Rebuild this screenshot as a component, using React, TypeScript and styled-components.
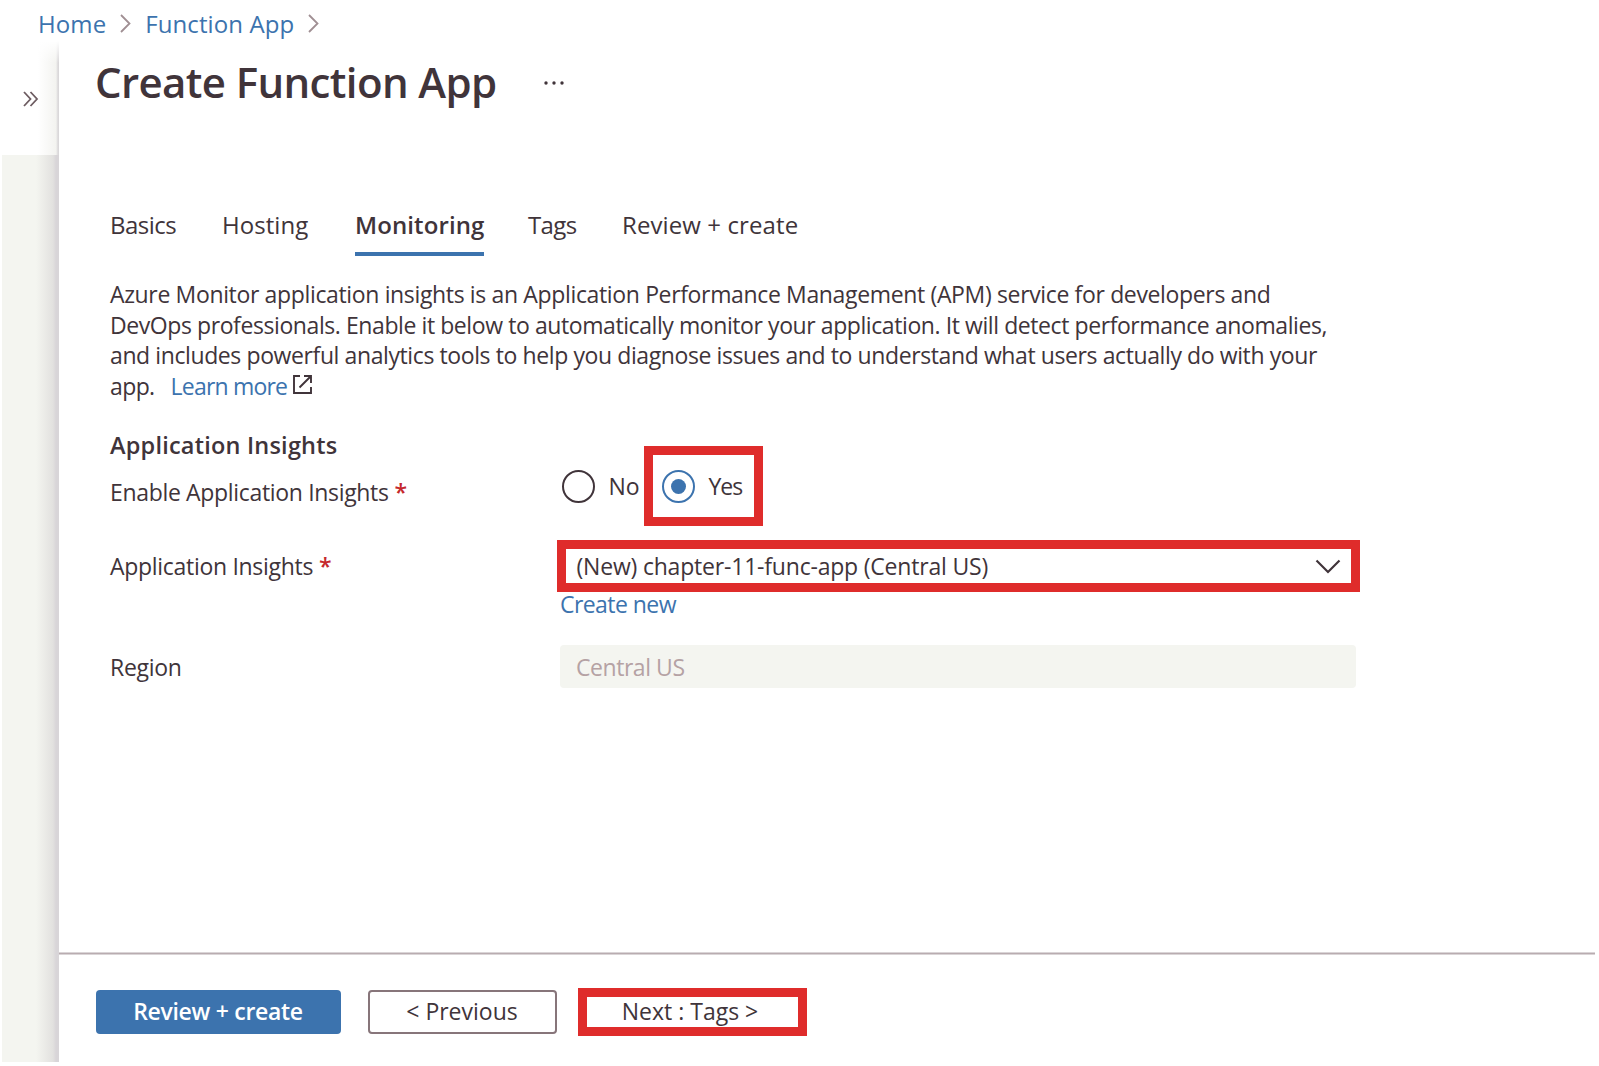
import React from "react";
import styled, { createGlobalStyle } from "styled-components";

const INK = "#40343a";
const BLUE = "#3c73ae";
const RED = "#df2c2b";

const GlobalStyle = createGlobalStyle`
  *, *::before, *::after { box-sizing: border-box; }
  body { margin: 0; background: #fff; }
`;

const Page = styled.div`
  display: flex;
  flex-direction: column;
  width: 1599px;
  height: 1066px;
  overflow: hidden;
  background: #fff;
  color: ${INK};
  font-family: "Open Sans", "Noto Sans", sans-serif;
  font-size: 23px;
`;

const Text = styled.span<{ $ls?: number }>`
  white-space: pre;
  letter-spacing: ${(p) => p.$ls ?? 0}px;
`;

const Breadcrumb = styled.nav`
  display: flex;
  align-items: center;
  flex: 0 0 41px;
  height: 41px;
  padding: 6px 0 0 38px;
  color: ${BLUE};
  font-size: 24px;
  line-height: 34px;
`;

const Separator = styled.svg<{ $left: number; $right: number }>`
  display: block;
  width: 11px;
  height: 19px;
  margin-left: ${(p) => p.$left}px;
  margin-right: ${(p) => p.$right}px;
`;

const Body = styled.div`
  display: flex;
  flex: 1;
  min-height: 0;
`;

const Rail = styled.aside`
  display: flex;
  flex-direction: column;
  width: 59px;
  padding-bottom: 4px;
`;

const RailTop = styled.div`
  height: 114px;
  padding: 50px 0 0 23px;
  background:
    linear-gradient(to bottom, #fff, rgba(255, 255, 255, 0) 22px),
    linear-gradient(to right, #fff 38px, #f3f3f0 56px, #dad8da 58px, #dad8da 59px);
`;

const Expand = styled.svg`
  display: block;
  width: 16px;
  height: 16px;
`;

const RailBody = styled.div`
  flex: 1;
  margin-left: 2px;
  background: linear-gradient(to right, #f4f5f0 34px, #e2e1df 51px, #d8d5d8 54px);
`;

const Panel = styled.main`
  display: flex;
  flex-direction: column;
  flex: 1;
`;

const TitleRow = styled.header`
  display: flex;
  align-items: center;
  height: 80px;
  padding: 2px 0 0 36px;
`;

const Title = styled.h1`
  margin: 0;
  width: 449px;
  font-size: 42px;
  font-weight: 600;
  line-height: 60px;
`;

const Dots = styled.svg`
  display: block;
  width: 20px;
  height: 4px;
  margin-top: 1px;
`;

const Tabs = styled.div`
  display: flex;
  height: 63px;
  margin: 72px 0 0 51px;
  font-size: 24px;
  line-height: 64px;
`;

const Tab = styled.div<{ $active?: boolean; $w: number }>`
  width: ${(p) => p.$w}px;
  font-weight: ${(p) => (p.$active ? 600 : 400)};
`;

const TabInner = styled.div<{ $active?: boolean }>`
  width: fit-content;
  height: 63px;
  box-shadow: ${(p) => (p.$active ? `inset 0 -4px ${BLUE}` : "none")};
`;

const Intro = styled.div`
  display: flex;
  flex-direction: column;
  margin: 23px 0 0 51px;
  line-height: 30.5px;
`;

const IntroLine = styled.div`
  display: flex;
  align-items: center;
  height: 30.5px;
`;

const Link = styled(Text)`
  color: ${BLUE};
`;

const LearnMore = styled.a`
  display: flex;
  align-items: center;
  gap: 6px;
  margin-left: 16px;
`;

const ExternalIcon = styled.svg`
  display: block;
  width: 19px;
  height: 19px;
  margin-bottom: 3px;
`;

const Heading = styled.h2`
  margin: 34px 0 0 51px;
  height: 20px;
  font-size: 23.5px;
  font-weight: 600;
  line-height: 20px;
`;

const Row = styled.div<{ $top: number }>`
  display: grid;
  grid-template-columns: 450px 800px;
  margin: ${(p) => p.$top}px 0 0 51px;
`;

const Label = styled.div<{ $h: number; $drop?: number }>`
  height: ${(p) => p.$h}px;
  padding-top: ${(p) => p.$drop ?? 0}px;
  line-height: ${(p) => p.$h - (p.$drop ?? 0)}px;
`;

const Star = styled.span`
  margin-left: 6px;
  color: #c5282c;
  font-weight: 600;
`;

const Options = styled.div`
  display: flex;
  height: 62px;
`;

const Option = styled.div<{ $marked?: boolean; $w: number }>`
  display: flex;
  align-items: center;
  gap: 14px;
  width: ${(p) => p.$w}px;
  padding-left: ${(p) => (p.$marked ? 8.5 : 1.5)}px;
  outline: ${(p) => (p.$marked ? `9px solid ${RED}` : "none")};
`;

const Radio = styled.span<{ $on?: boolean }>`
  display: flex;
  align-items: center;
  justify-content: center;
  flex: none;
  width: 33px;
  height: 33px;
  border: 2px solid ${(p) => (p.$on ? BLUE : INK)};
  border-radius: 50%;
  &::after {
    content: "";
    width: 15px;
    height: 15px;
    border-radius: 50%;
    background: ${(p) => (p.$on ? BLUE : "transparent")};
  }
`;

const Select = styled.div`
  display: flex;
  align-items: center;
  justify-content: space-between;
  width: 785px;
  height: 34px;
  margin-left: 5.5px;
  padding: 0 10px 0 11px;
  line-height: 32px;
  outline: 9px solid ${RED};
`;

const Chevron = styled.svg`
  display: block;
  width: 26px;
  height: 15px;
`;

const CreateNew = styled.div`
  height: 30px;
  margin-top: 6px;
  line-height: 30px;
`;

const Disabled = styled.div`
  width: 796px;
  height: 43px;
  padding-left: 16px;
  border-radius: 4px;
  background: #f4f5f0;
  color: #b5a2a4;
  line-height: 44px;
`;

const Footer = styled.footer`
  display: flex;
  height: 114px;
  margin: auto 4px 0 0;
  padding: 38px 0 0 36.5px;
  background: linear-gradient(#dad5d7 1px, #b9acb0 1px, #b9acb0 2px, #dad5d7 2px, #dad5d7 3px, #fff 3px);
`;

const Button = styled.button<{ $kind: "primary" | "plain" | "marked"; $w: number; $left?: number }>`
  display: flex;
  align-items: center;
  justify-content: center;
  width: ${(p) => p.$w}px;
  height: ${(p) => (p.$kind === "marked" ? 30 : 44)}px;
  margin: ${(p) => (p.$kind === "marked" ? 7 : 0)}px 0 0 ${(p) => p.$left ?? 0}px;
  padding: 0 ${(p) => (p.$kind === "marked" ? 4 : 0)}px 2px 0;
  border: ${(p) => (p.$kind === "plain" ? "2px solid #87757a" : "0")};
  outline: ${(p) => (p.$kind === "marked" ? `9px solid ${RED}` : "none")};
  border-radius: ${(p) => (p.$kind === "marked" ? 0 : 4)}px;
  background: ${(p) => (p.$kind === "primary" ? BLUE : "#fff")};
  color: ${(p) => (p.$kind === "primary" ? "#fff" : INK)};
  font: inherit;
  font-weight: ${(p) => (p.$kind === "primary" ? 600 : 400)};
`;

const Crumb = ({ left, right }: { left: number; right: number }) => (
  <Separator $left={left} $right={right} viewBox="0 0 11 19" fill="none" stroke="#a08f93" strokeWidth="1.8">
    <path d="M1 1 L9.5 9.5 L1 18" />
  </Separator>
);

export default function App() {
  return (
    <Page>
      <GlobalStyle />
      <Breadcrumb>
        <Text $ls={0.1}>Home</Text>
        <Crumb left={14} right={14} />
        <Text $ls={0.1}>Function App</Text>
        <Crumb left={13.5} right={0} />
      </Breadcrumb>
      <Body>
        <Rail>
          <RailTop>
            <Expand viewBox="0 0 16 16" fill="none" stroke="#6d5c61" strokeWidth="1.8">
              <path d="M1 1 L7.5 8 L1 15 M7.5 1 L14 8 L7.5 15" />
            </Expand>
          </RailTop>
          <RailBody />
        </Rail>
        <Panel>
          <TitleRow>
            <Title><Text $ls={-0.62}>Create Function App</Text></Title>
            <Dots viewBox="0 0 20 4" fill={INK}>
              <circle cx="2" cy="2" r="1.7" />
              <circle cx="10" cy="2" r="1.7" />
              <circle cx="18" cy="2" r="1.7" />
            </Dots>
          </TitleRow>
          <Tabs>
            <Tab $w={112}><TabInner><Text $ls={-0.5}>Basics</Text></TabInner></Tab>
            <Tab $w={133}><TabInner><Text $ls={0.05}>Hosting</Text></TabInner></Tab>
            <Tab $w={173} $active><TabInner $active><Text $ls={0.1}>Monitoring</Text></TabInner></Tab>
            <Tab $w={94}><TabInner><Text $ls={-0.6}>Tags</Text></TabInner></Tab>
            <Tab $w={190}><TabInner><Text $ls={0.1}>Review + create</Text></TabInner></Tab>
          </Tabs>
          <Intro>
            <IntroLine>
              <Text $ls={-0.353}>Azure Monitor application insights is an Application Performance Management (APM) service for developers and</Text>
            </IntroLine>
            <IntroLine>
              <Text $ls={-0.418}>DevOps professionals. Enable it below to automatically monitor your application. It will detect performance anomalies,</Text>
            </IntroLine>
            <IntroLine>
              <Text $ls={-0.4}>and includes powerful analytics tools to help you diagnose issues and to understand what users actually do with your</Text>
            </IntroLine>
            <IntroLine>
              <Text $ls={-0.6}>app.</Text>
              <LearnMore>
                <Link $ls={-0.8}>Learn more</Link>
                <ExternalIcon viewBox="0 0 19 19" fill="none" stroke={INK} strokeWidth="1.9">
                  <path d="M7 1 H1 V18 H18 V12 M11 1 H18 V8 M18 1 L6.5 12.5" />
                </ExternalIcon>
              </LearnMore>
            </IntroLine>
          </Intro>
          <Heading><Text $ls={0.21}>Application Insights</Text></Heading>
          <Row $top={0}>
            <Label $h={63} $drop={12}><Text $ls={-0.33}>Enable Application Insights</Text><Star>*</Star></Label>
            <Options>
              <Option $w={93}><Radio /><Text>No</Text></Option>
              <Option $w={101} $marked><Radio $on /><Text $ls={-1}>Yes</Text></Option>
            </Options>
          </Row>
          <Row $top={31}>
            <Label $h={34}><Text $ls={-0.3}>Application Insights</Text><Star>*</Star></Label>
            <div>
              <Select>
                <Text $ls={-0.2}>(New) chapter-11-func-app (Central US)</Text>
                <Chevron viewBox="0 0 26 15" fill="none" stroke={INK} strokeWidth="2.2">
                  <path d="M1.5 1.5 L13 13 L24.5 1.5" />
                </Chevron>
              </Select>
              <CreateNew><Link $ls={-0.56}>Create new</Link></CreateNew>
            </div>
          </Row>
          <Row $top={26}>
            <Label $h={44}><Text $ls={-0.3}>Region</Text></Label>
            <Disabled><Text $ls={-0.45}>Central US</Text></Disabled>
          </Row>
          <Footer>
            <Button $kind="primary" $w={245}><Text $ls={-0.29}>Review + create</Text></Button>
            <Button $kind="plain" $w={189} $left={27}><Text>&lt; Previous</Text></Button>
            <Button $kind="marked" $w={211} $left={30}><Text>Next : Tags &gt;</Text></Button>
          </Footer>
        </Panel>
      </Body>
    </Page>
  );
}
